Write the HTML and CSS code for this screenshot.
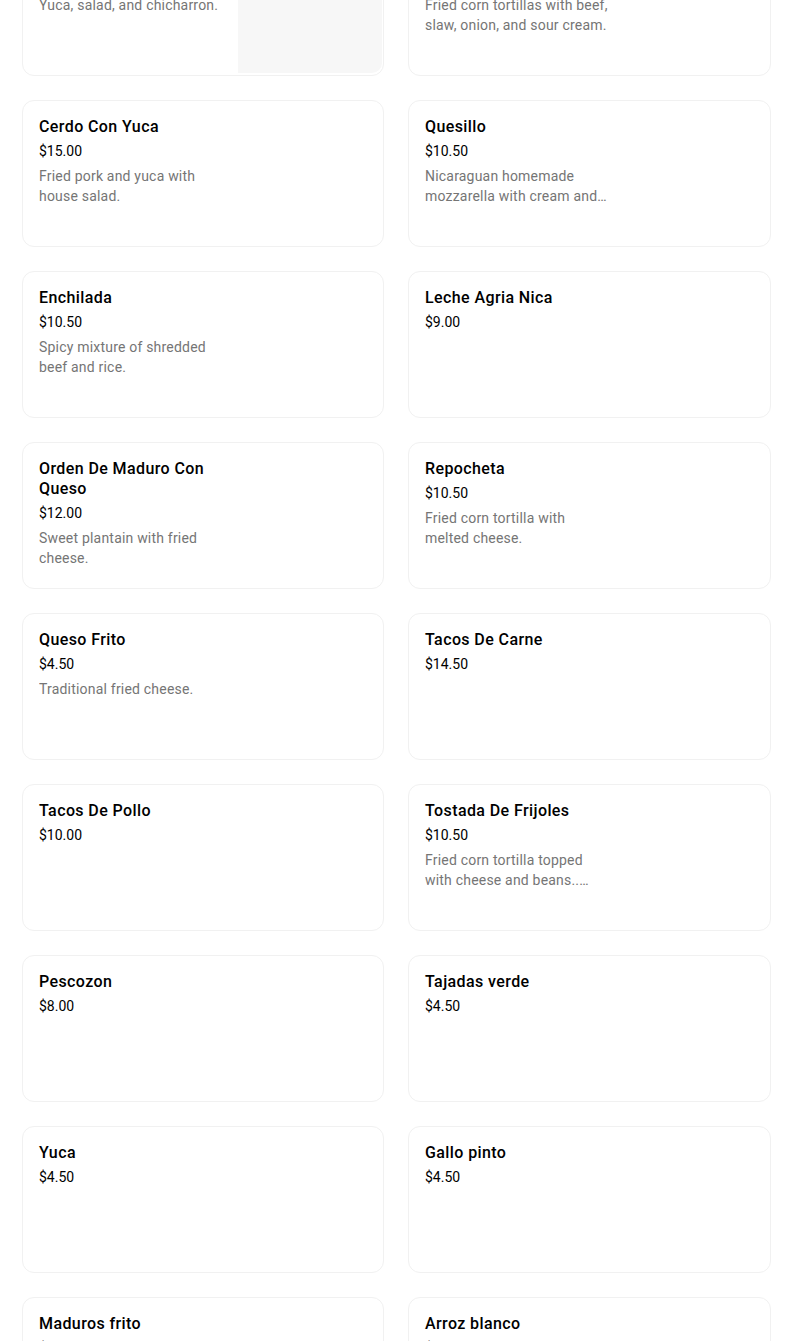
FILE: index.html
```html
<!DOCTYPE html>
<html lang="en">
<head>
<meta charset="utf-8">
<title>Menu</title>
<link rel="stylesheet" href="styles.css">
</head>
<body>
<div class="grid">
  <div class="card">
    <div class="info">
      <div class="title">Vigoron</div>
      <div class="price">$12.00</div>
      <div class="desc">Yuca, salad, and chicharron.</div>
    </div>
    <div class="thumb"></div>
  </div>
  <div class="card">
    <div class="info">
      <div class="title">Tacos Nicas</div>
      <div class="price">$12.50</div>
      <div class="desc">Fried corn tortillas with beef, slaw, onion, and sour cream.</div>
    </div>
  </div>

  <div class="card">
    <div class="info">
      <div class="title">Cerdo Con Yuca</div>
      <div class="price">$15.00</div>
      <div class="desc">Fried pork and yuca with house salad.</div>
    </div>
  </div>
  <div class="card">
    <div class="info">
      <div class="title">Quesillo</div>
      <div class="price">$10.50</div>
      <div class="desc">Nicaraguan homemade mozzarella with cream and pickled onions wrapped in a tortilla.</div>
    </div>
  </div>

  <div class="card">
    <div class="info">
      <div class="title">Enchilada</div>
      <div class="price">$10.50</div>
      <div class="desc">Spicy mixture of shredded beef and rice.</div>
    </div>
  </div>
  <div class="card">
    <div class="info">
      <div class="title">Leche Agria Nica</div>
      <div class="price">$9.00</div>
    </div>
  </div>

  <div class="card">
    <div class="info">
      <div class="title">Orden De Maduro Con Queso</div>
      <div class="price">$12.00</div>
      <div class="desc">Sweet plantain with fried cheese.</div>
    </div>
  </div>
  <div class="card">
    <div class="info">
      <div class="title">Repocheta</div>
      <div class="price">$10.50</div>
      <div class="desc">Fried corn tortilla with melted cheese.</div>
    </div>
  </div>

  <div class="card">
    <div class="info">
      <div class="title">Queso Frito</div>
      <div class="price">$4.50</div>
      <div class="desc">Traditional fried cheese.</div>
    </div>
  </div>
  <div class="card">
    <div class="info">
      <div class="title">Tacos De Carne</div>
      <div class="price">$14.50</div>
    </div>
  </div>

  <div class="card">
    <div class="info">
      <div class="title">Tacos De Pollo</div>
      <div class="price">$10.00</div>
    </div>
  </div>
  <div class="card">
    <div class="info">
      <div class="title">Tostada De Frijoles</div>
      <div class="price">$10.50</div>
      <div class="desc">Fried corn tortilla topped with cheese and beans.. Served with cream and salad.</div>
    </div>
  </div>

  <div class="card">
    <div class="info">
      <div class="title">Pescozon</div>
      <div class="price">$8.00</div>
    </div>
  </div>
  <div class="card">
    <div class="info">
      <div class="title">Tajadas verde</div>
      <div class="price">$4.50</div>
    </div>
  </div>

  <div class="card">
    <div class="info">
      <div class="title">Yuca</div>
      <div class="price">$4.50</div>
    </div>
  </div>
  <div class="card">
    <div class="info">
      <div class="title">Gallo pinto</div>
      <div class="price">$4.50</div>
    </div>
  </div>

  <div class="card">
    <div class="info">
      <div class="title">Maduros frito</div>
      <div class="price">$4.50</div>
    </div>
  </div>
  <div class="card">
    <div class="info">
      <div class="title">Arroz blanco</div>
      <div class="price">$4.00</div>
    </div>
  </div>
</div>
</body>
</html>
```

FILE: styles.css
```css
html, body {
  margin: 0;
  padding: 0;
  background: #ffffff;
}

body {
  font-family: Roboto, "Liberation Sans", sans-serif;
  color: #000000;
  overflow: hidden;
}

.grid {
  display: grid;
  grid-template-columns: 362px 363px;
  column-gap: 24px;
  row-gap: 24px;
  margin: -71px 0 0 22px;
}

.card {
  box-sizing: border-box;
  height: 147px;
  border: 1px solid #f1f1f1;
  border-radius: 12px;
  display: flex;
  justify-content: space-between;
  overflow: hidden;
  background: #ffffff;
}

.info {
  box-sizing: border-box;
  width: 217px;
  padding: 16px 16px 16px 16px;
}

.title {
  font-size: 16px;
  font-weight: 500;
  line-height: 20px;
  letter-spacing: 0.4px;
  color: #000000;
}

.price {
  margin-top: 4px;
  font-size: 14px;
  line-height: 20px;
  color: #000000;
}

.desc {
  margin-top: 5px;
  font-size: 14px;
  line-height: 20px;
  letter-spacing: 0.2px;
  color: #757575;
  display: -webkit-box;
  -webkit-line-clamp: 2;
  -webkit-box-orient: vertical;
  overflow: hidden;
}

.thumb {
  width: 146px;
  align-self: stretch;
  margin: 1px 1px 2px 0;
  background: #f7f7f7;
  border-radius: 0 10px 10px 0;
}
```
